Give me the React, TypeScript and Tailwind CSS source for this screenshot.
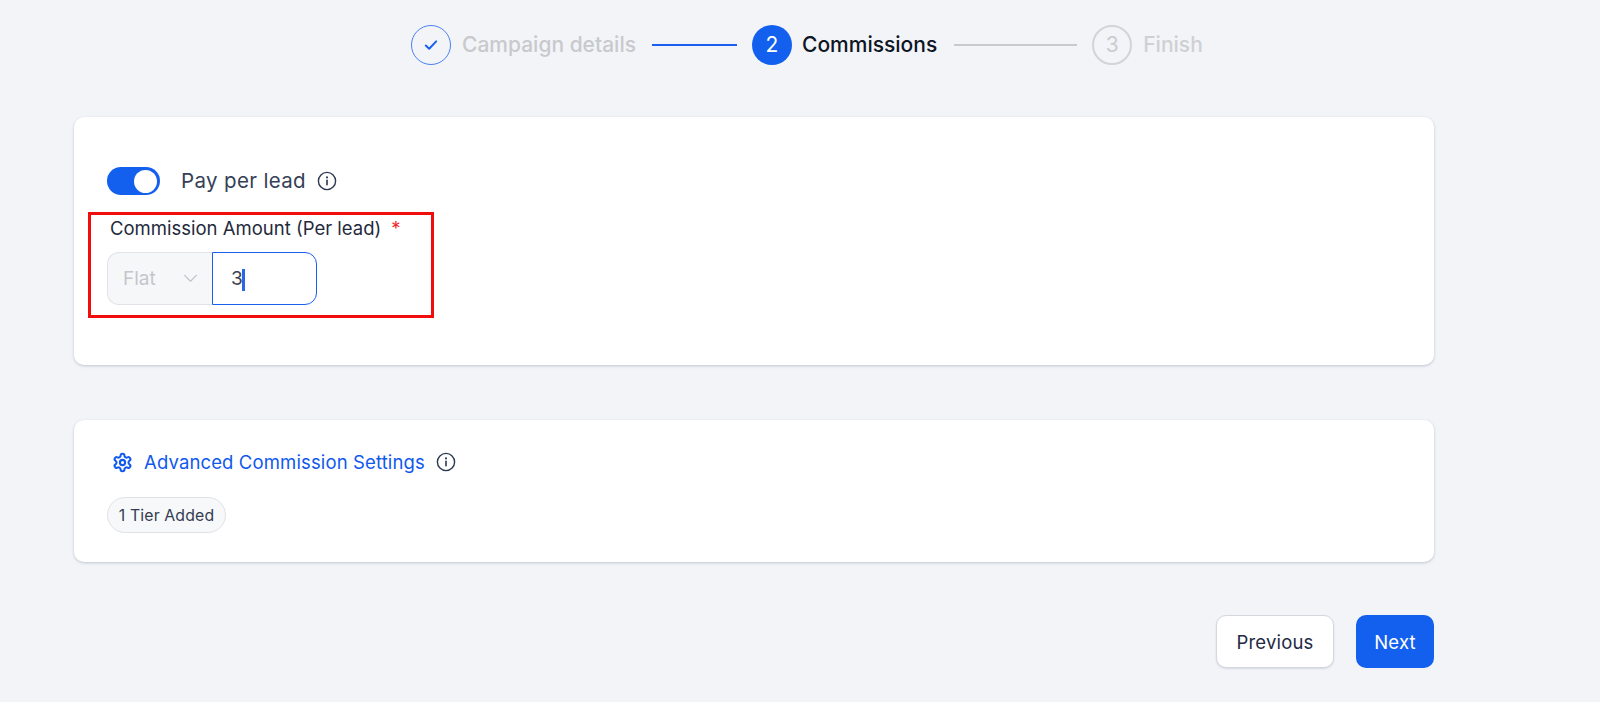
import React from "react";

const Info = ({ className }: { className: string }) => (
  <svg viewBox="0 0 20 20" fill="none" stroke="currentColor" strokeWidth="1.4" strokeLinecap="round" className={className}>
    <circle cx="10" cy="10" r="8.6" />
    <path d="M10 9.2v4.6" strokeWidth="1.6" />
    <path d="M10 6.2v.2" strokeWidth="2" />
  </svg>
);

const Gear = () => (
  <svg viewBox="0 0 24 24" fill="none" stroke="currentColor" strokeWidth="2.3" strokeLinecap="round" strokeLinejoin="round" className="w-[21px] h-[21px] text-[#1059ee] shrink-0">
    <path d="M12.22 2h-.44a2 2 0 0 0-2 2v.18a2 2 0 0 1-1 1.73l-.43.25a2 2 0 0 1-2 0l-.15-.08a2 2 0 0 0-2.73.73l-.22.38a2 2 0 0 0 .73 2.73l.15.1a2 2 0 0 1 1 1.72v.51a2 2 0 0 1-1 1.74l-.15.09a2 2 0 0 0-.73 2.73l.22.38a2 2 0 0 0 2.73.73l.15-.08a2 2 0 0 1 2 0l.43.25a2 2 0 0 1 1 1.73V20a2 2 0 0 0 2 2h.44a2 2 0 0 0 2-2v-.18a2 2 0 0 1 1-1.73l.43-.25a2 2 0 0 1 2 0l.15.08a2 2 0 0 0 2.73-.73l.22-.39a2 2 0 0 0-.73-2.73l-.15-.08a2 2 0 0 1-1-1.74v-.5a2 2 0 0 1 1-1.74l.15-.09a2 2 0 0 0 .73-2.73l-.22-.38a2 2 0 0 0-2.73-.73l-.15.08a2 2 0 0 1-2 0l-.43-.25a2 2 0 0 1-1-1.73V4a2 2 0 0 0-2-2z" />
    <circle cx="12" cy="12" r="3" />
  </svg>
);

export default function App() {
  return (
    <div className="h-[702px] overflow-hidden bg-[#f2f4f8] font-['Inter',sans-serif] flex flex-col">
      {/* Stepper */}
      <div className="flex items-center pl-[411px] pt-[25px] h-[64px] shrink-0 text-[21px] leading-[36px] font-normal">
        <div className="w-10 h-10 rounded-full border-[1.5px] border-[#4a80f2] flex items-center justify-center shrink-0">
          <svg viewBox="0 0 16 16" fill="none" stroke="#1a5fef" strokeWidth="2" strokeLinecap="round" strokeLinejoin="round" className="w-4 h-4">
            <path d="M2.8 8.6l3.4 3.2 7-7.4" />
          </svg>
        </div>
        <span className="ml-[11px] font-medium text-[#c8c9cc] whitespace-nowrap">Campaign details</span>
        <div className="ml-[16px] w-[85px] h-[2px] bg-[#1a5fef]" />
        <div className="ml-[15px] w-10 h-10 rounded-full bg-[#1360ef] text-white flex items-center justify-center shrink-0">2</div>
        <span className="ml-[10px] font-medium text-[#0e1524] whitespace-nowrap">Commissions</span>
        <div className="ml-[17px] w-[123px] h-[2px] bg-[#c9cacc]" />
        <div className="ml-[15px] w-10 h-10 rounded-full border-2 border-[#d3d4d6] text-[#cbcccf] flex items-center justify-center shrink-0">3</div>
        <span className="ml-[11px] font-medium text-[#cfd0d3] whitespace-nowrap">Finish</span>
      </div>

      {/* Card 1 */}
      <div className="ml-[74px] mt-[53px] w-[1360px] h-[248px] shrink-0 bg-white rounded-[10px] shadow-[0_1px_3px_rgba(100,110,130,0.35)] pl-[33px] pt-[50px]">
        <div className="flex items-center h-[28px]">
          <div className="w-[53px] h-[28px] rounded-full bg-[#1360ef] flex items-center justify-end pr-[3px] shrink-0">
            <div className="w-[23px] h-[23px] rounded-full bg-white" />
          </div>
          <span className="ml-[21px] text-[20.5px] leading-[28px] text-[#354056] tracking-[0.35px] whitespace-nowrap">Pay per lead</span>
          <Info className="ml-[11px] w-[20px] h-[20px] text-[#2c3850]" />
        </div>
        <div className="ml-[-19px] mt-[17px] w-[346px] h-[106px] border-[3px] border-[#f20d0d] pl-[16px]">
          <div className="flex items-center h-[27px] pl-[3px] text-[18.5px] leading-[27px] text-[#1f2a3d] whitespace-nowrap">
            Commission Amount (Per lead)
            <span className="ml-[10px] text-[#ee2a2a]">*</span>
          </div>
          <div className="flex mt-[10px] h-[53px] w-[210px]">
            <div className="w-[105px] shrink-0 rounded-l-[12px] border-[1.5px] border-r-0 border-[#e2e3e8] bg-[#f6f7f9] flex items-center justify-between pl-[15px] pr-[14px] text-[19px] text-[#c4c6cb]">
              <span className="mt-[2px]">Flat</span>
              <svg viewBox="0 0 16 10" fill="none" stroke="#c0c3c9" strokeWidth="1.4" strokeLinecap="round" strokeLinejoin="round" className="w-[15px] h-[9px]">
                <path d="M1.5 1.5L8 8l6.5-6.5" />
              </svg>
            </div>
            <div className="w-[105px] shrink-0 rounded-r-[12px] border-[1.5px] border-[#1a5fef] bg-white flex items-center pl-[18px] text-[19px] text-[#3a4150]">
              <span className="mt-[2px]">3</span>
              <span className="ml-[-1px] mt-[2px] w-[3px] h-[22px] bg-[#2f63e8]" />
            </div>
          </div>
        </div>
      </div>

      {/* Card 2 */}
      <div className="ml-[74px] mt-[55px] w-[1360px] h-[142px] shrink-0 bg-white rounded-[10px] shadow-[0_1px_3px_rgba(100,110,130,0.35)] pl-[33px] pt-[31px]">
        <div className="flex items-center h-[22px] pl-[5px]">
          <Gear />
          <span className="ml-[11px] text-[18.5px] leading-[22px] font-normal tracking-[0.13px] text-[#1059ee] whitespace-nowrap">Advanced Commission Settings</span>
          <Info className="ml-[11px] w-[20px] h-[20px] text-[#2c3850]" />
        </div>
        <div className="mt-[24px] w-[119px] h-[36px] pt-[1px] rounded-full border-[1.5px] border-[#e1e2e6] bg-[#f7f8fa] flex items-center justify-center text-[15.8px] font-normal tracking-[0.15px] text-[#333d50] whitespace-nowrap">
          1 Tier Added
        </div>
      </div>

      {/* Buttons */}
      <div className="ml-[1216px] mt-[53px] flex items-center gap-[22px] w-[218px]">
        <button className="w-[118px] h-[53px] pt-[2px] rounded-[10px] border-[1.5px] border-[#d3d7df] bg-white text-[18.5px] font-normal tracking-[0.2px] text-[#1f2a44] shadow-[0_1px_2px_rgba(100,110,130,0.2)]">Previous</button>
        <button className="w-[78px] h-[53px] pt-[2px] rounded-[10px] bg-[#1360ef] text-[18.5px] font-normal tracking-[0.2px] text-white">Next</button>
      </div>
    </div>
  );
}
